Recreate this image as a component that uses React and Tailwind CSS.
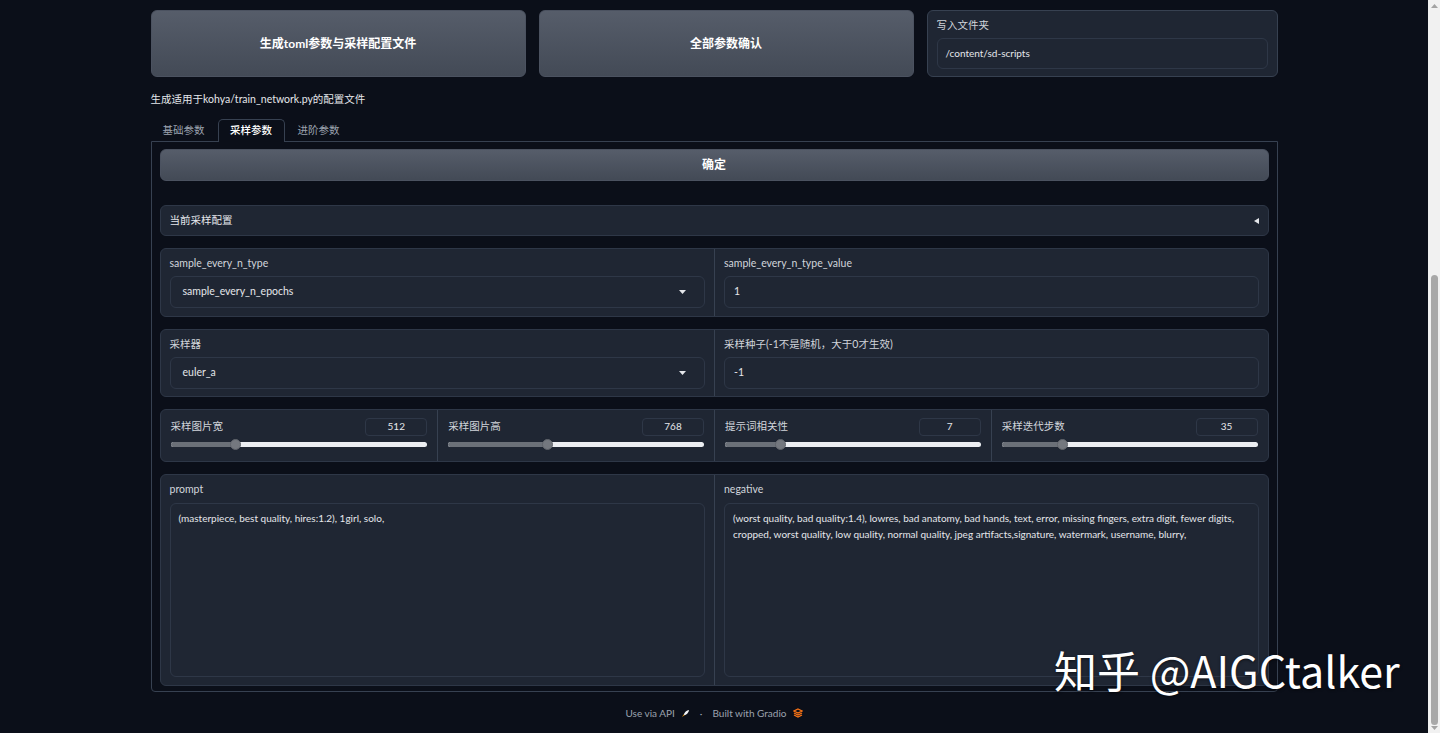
import React from "react";

const sliders = [
  { label: "采样图片宽", value: "512", pct: 25 },
  { label: "采样图片高", value: "768", pct: 38.5 },
  { label: "提示词相关性", value: "7", pct: 21.5 },
  { label: "采样迭代步数", value: "35", pct: 23.5 },
];

function Label({ children }) {
  return <div className="text-[10.5px] leading-[14px] text-[#d1d5db]">{children}</div>;
}

function Field({ children, dropdown }) {
  return (
    <div className="mt-[6px] h-[32px] rounded-[6px] border border-[#2e3747] bg-[#1f2633] pl-[12px] pr-[18px] flex items-center justify-between text-[10.5px] text-[#e5e7eb]">
      <span>{children}</span>
      {dropdown && (
        <svg width="7" height="4" viewBox="0 0 7 4">
          <path d="M0 0 L7 0 L3.5 4 Z" fill="#e5e7eb" />
        </svg>
      )}
    </div>
  );
}

function Slider({ label, value, pct, first }) {
  return (
    <div className={"px-[10px] pt-[7px] " + (first ? "" : "border-l border-[#374151]")}>
      <div className="flex items-center justify-between h-[18px]">
        <Label>{label}</Label>
        <div className="w-[62px] h-[18px] mt-[1px] rounded-[4px] border border-[#2e3747] flex items-center justify-center text-[10px] text-[#e5e7eb]">
          {value}
        </div>
      </div>
      <div className="relative mt-[5px] h-[8px] flex items-center">
        <div className="w-full h-[5px] rounded-full bg-[#eceef2] overflow-hidden">
          <div className="h-full bg-[#6b7078]" style={{ width: pct + "%" }} />
        </div>
        <div
          className="absolute top-[-1px] w-[11px] h-[11px] -ml-[5px] rounded-full bg-[#74787f] border border-[#5f636a]"
          style={{ left: pct + "%" }}
        />
      </div>
    </div>
  );
}

export default function App() {
  return (
    <div className="flex h-[733px] overflow-hidden font-['Lato','Noto_Sans_CJK_SC',sans-serif]">
      <div className="relative flex-1 bg-[#0b0f19]">
        <div className="w-[1127px] mx-auto pt-[10px]">
          {/* top row */}
          <div className="flex gap-[13px] h-[67px]">
            <button className="w-[375px] rounded-[6px] border border-[#4b5260] bg-linear-to-b from-[#565d6a] to-[#434a56] text-[12px] font-bold text-white">
              生成toml参数与采样配置文件
            </button>
            <button className="w-[375px] rounded-[6px] border border-[#4b5260] bg-linear-to-b from-[#565d6a] to-[#434a56] text-[12px] font-bold text-white">
              全部参数确认
            </button>
            <div className="flex-1 rounded-[6px] border border-[#374151] bg-[#1f2633] px-[9px] pt-[7px]">
              <Label>写入文件夹</Label>
              <div className="mt-[6px] h-[31px] rounded-[6px] border border-[#2e3747] px-[8px] flex items-center text-[10px] text-[#e5e7eb]">
                /content/sd-scripts
              </div>
            </div>
          </div>

          <div className="mt-[15px] text-[10.5px] leading-[14px] text-[#e5e7eb]">
            生成适用于kohya/train_network.py的配置文件
          </div>

          {/* tabs */}
          <div className="mt-[13px] flex h-[23px] text-[10.5px]">
            <div className="w-[67px] pl-[12px] flex items-center text-[#9ca3af]">基础参数</div>
            <div className="relative z-10 w-[67px] rounded-t-[5px] border border-b-0 border-[#374151] bg-[#0b0f19] flex items-center justify-center text-white font-medium">
              采样参数
            </div>
            <div className="pl-[13px] flex items-center text-[#9ca3af]">进阶参数</div>
          </div>

          {/* panel */}
          <div className="-mt-px border border-[#374151] rounded-b-[4px] px-[8px] pt-[7px] pb-[5px]">
            <button className="w-full h-[32px] rounded-[6px] border border-[#4b5260] bg-linear-to-b from-[#565d6a] to-[#434a56] text-[12px] font-bold text-white">
              确定
            </button>

            <div className="mt-[24px] h-[31px] rounded-[6px] border border-[#2e3747] bg-[#1f2633] px-[9px] flex items-center justify-between">
              <span className="text-[10.5px] text-[#e5e7eb]">当前采样配置</span>
              <svg width="5" height="6" viewBox="0 0 5 6">
                <path d="M5 0 L5 6 L0 3 Z" fill="#e5e7eb" />
              </svg>
            </div>

            <div className="mt-[12px] h-[69px] grid grid-cols-2 rounded-[6px] border border-[#2e3747] bg-[#1f2633]">
              <div className="px-[9px] pt-[7px]">
                <Label>sample_every_n_type</Label>
                <Field dropdown>sample_every_n_epochs</Field>
              </div>
              <div className="px-[9px] pt-[7px] border-l border-[#374151]">
                <Label>sample_every_n_type_value</Label>
                <div className="mt-[6px] h-[32px] rounded-[6px] border border-[#2e3747] px-[9px] flex items-center text-[10.5px] text-[#e5e7eb]">
                  1
                </div>
              </div>
            </div>

            <div className="mt-[12px] h-[68px] grid grid-cols-2 rounded-[6px] border border-[#2e3747] bg-[#1f2633]">
              <div className="px-[9px] pt-[7px]">
                <Label>采样器</Label>
                <Field dropdown>euler_a</Field>
              </div>
              <div className="px-[9px] pt-[7px] border-l border-[#374151]">
                <Label>采样种子(-1不是随机，大于0才生效)</Label>
                <div className="mt-[6px] h-[32px] rounded-[6px] border border-[#2e3747] px-[9px] flex items-center text-[10.5px] text-[#e5e7eb]">
                  -1
                </div>
              </div>
            </div>

            <div className="mt-[12px] h-[53px] grid grid-cols-4 rounded-[6px] border border-[#2e3747] bg-[#1f2633]">
              {sliders.map((s, i) => (
                <Slider key={s.label} {...s} first={i === 0} />
              ))}
            </div>

            <div className="mt-[12px] h-[212px] grid grid-cols-2 rounded-[6px] border border-[#2e3747] bg-[#1f2633]">
              <div className="px-[9px] pt-[7px]">
                <Label>prompt</Label>
                <div className="mt-[7px] h-[174px] rounded-[6px] border border-[#2e3747] px-[8px] pt-[6px] text-[10px] leading-[16px] text-[#e5e7eb]">
                  (masterpiece, best quality, hires:1.2), 1girl, solo,
                </div>
              </div>
              <div className="px-[9px] pt-[7px] border-l border-[#374151]">
                <Label>negative</Label>
                <div className="mt-[7px] h-[174px] rounded-[6px] border border-[#2e3747] px-[8px] pt-[6px] text-[10px] leading-[16px] text-[#e5e7eb]">
                  (worst quality, bad quality:1.4), lowres, bad anatomy, bad hands, text, error, missing fingers, extra digit, fewer digits, cropped, worst quality, low quality, normal quality, jpeg artifacts,signature, watermark, username, blurry,
                </div>
              </div>
            </div>
          </div>

          {/* footer */}
          <div className="mt-[14px] flex items-center justify-center gap-[6px] text-[10px] leading-[14px] text-[#9ca3af]">
            <span>Use via API</span>
            <svg width="9" height="9" viewBox="0 0 10 10">
              <path d="M9 1 C6 1.5 4 3.5 3 6 L4 7 C6.5 6 8.5 4 9 1 Z" fill="#f3f4f6" />
              <path d="M3 6 L1 9 L4 7 Z" fill="#f59e0b" />
            </svg>
            <span className="px-[4px]">·</span>
            <span>Built with Gradio</span>
            <svg width="10" height="10" viewBox="0 0 10 10">
              <path d="M5 1 L9 3 L5 5 L1 3 Z" fill="none" stroke="#f97316" strokeWidth="1.3" />
              <path d="M1 5 L5 7 L9 5" fill="none" stroke="#f97316" strokeWidth="1.3" />
              <path d="M1 7 L5 9 L9 7" fill="none" stroke="#f97316" strokeWidth="1.3" />
            </svg>
          </div>
        </div>

        {/* watermark overlay */}
        <div className="absolute left-[1054px] top-[642px] font-['Noto_Sans_CJK_SC',sans-serif] text-[43px] leading-[54px] text-white [text-shadow:0_1px_3px_rgba(0,0,0,0.6)] whitespace-nowrap">
          知乎 @AIGCtalker
        </div>
      </div>

      {/* scrollbar */}
      <div className="w-[12px] bg-[#f1f1f1] flex flex-col items-center">
        <svg width="7" height="4" viewBox="0 0 7 4" className="mt-[4px]">
          <path d="M0 4 L7 4 L3.5 0 Z" fill="#a3a3a3" />
        </svg>
        <div className="mt-[267px] w-[7px] h-[450px] rounded-full bg-[#a8a8a8]" />
        <svg width="7" height="4" viewBox="0 0 7 4" className="mt-auto mb-[3px]">
          <path d="M0 0 L7 0 L3.5 4 Z" fill="#a3a3a3" />
        </svg>
      </div>
    </div>
  );
}
